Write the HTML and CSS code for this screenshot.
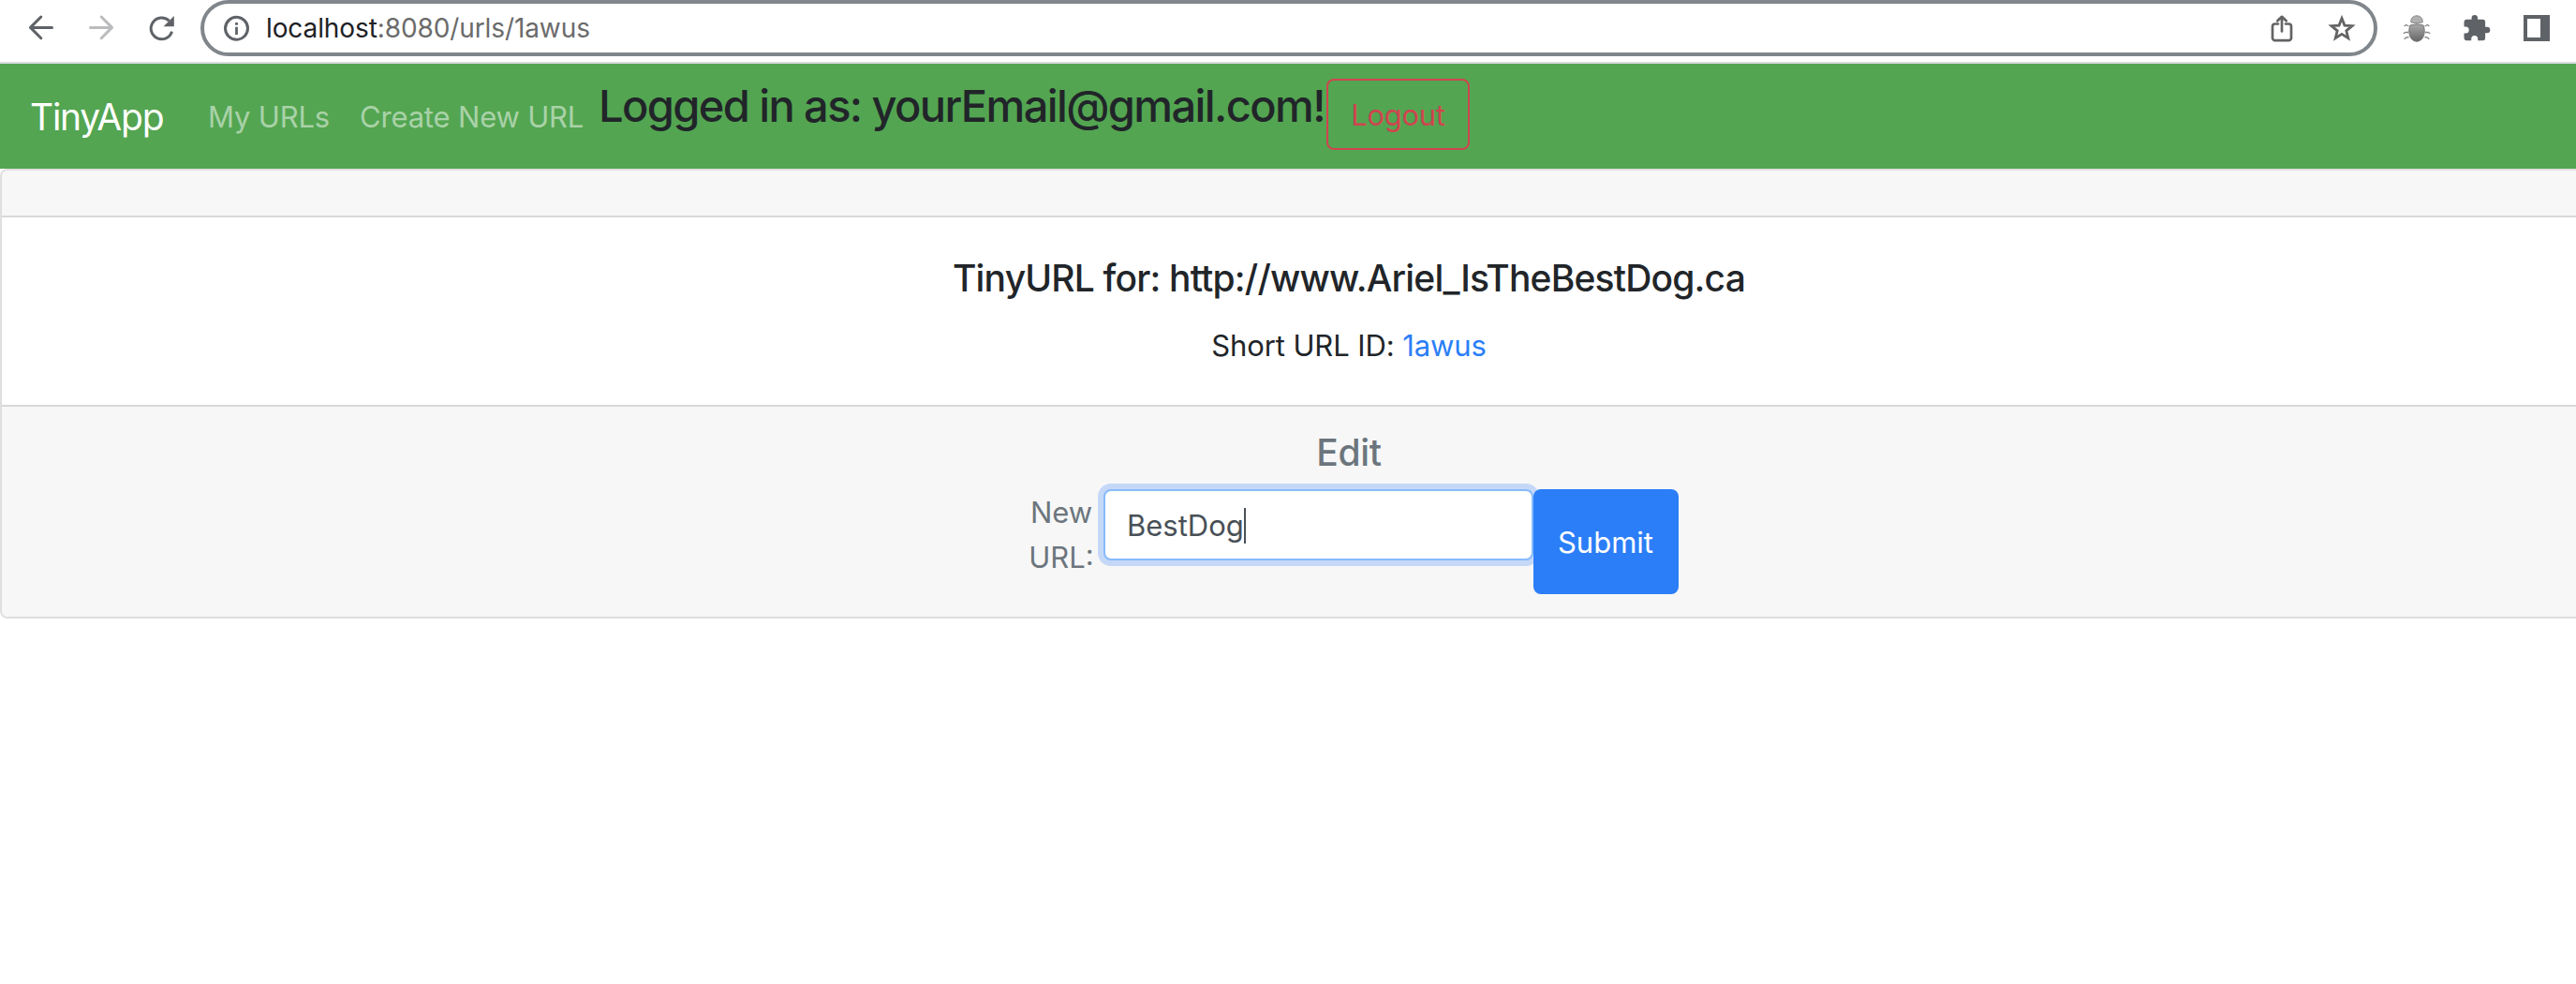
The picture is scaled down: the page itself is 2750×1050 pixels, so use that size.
FILE: index.html
```html
<!DOCTYPE html>
<html lang="en">
<head>
<meta charset="utf-8">
<title>TinyApp</title>
<link rel="stylesheet" href="styles.css">
</head>
<body>
<div class="browser-bar">
  <div class="controls">
    <svg class="icon" width="32" height="32" viewBox="0 0 32 32"><path d="M27.500 14.400H4.500M15.800 3 4.500 14.400l11.300 11.300"/></svg>
    <svg class="icon disabled" width="32" height="32" viewBox="0 0 32 32"><path d="M4.500 14.400h23M16.200 3 27.500 14.400 16.200 25.700"/></svg>
    <svg class="icon" width="32" height="32" viewBox="0 0 32 32"><path d="M24.600 7.300A11.400 11.400 0 1 0 27.500 18.600" stroke-linecap="butt"/><path class="solid" d="M29.800 2v11.200H18.600z"/></svg>
  </div>
  <div class="address">
    <svg class="icon info" width="28" height="28" viewBox="0 0 28 28"><circle cx="13.500" cy="14.300" r="12"/><path class="solid" d="M12.100 8h2.800v2.800h-2.800zM12.100 12.800h2.800V21h-2.800z"/></svg>
    <span class="url"><span class="host">localhost</span>:8080/urls/1awus</span>
    <svg class="icon share" width="24" height="30" viewBox="0 0 24 30"><path d="M8 10.500H4.700A2.700 2.700 0 0 0 2 13.200v12.300a2.700 2.700 0 0 0 2.700 2.700h14.600a2.700 2.700 0 0 0 2.700-2.700V13.200a2.700 2.700 0 0 0-2.700-2.700H16M12 18.500V3M7.300 7.300 12 2.800l4.700 4.500" stroke-width="2.700"/></svg>
    <svg class="icon star" width="30" height="30" viewBox="0 0 30 30"><path d="m15 4.500 2.950 7.550 8.100.550-6.250 5.200 2 7.900L15 21.400l-6.800 4.300 2-7.900-6.250-5.200 8.100-.550z" stroke-width="2.800" stroke-linejoin="miter" stroke-miterlimit="6"/></svg>
  </div>
  <div class="extensions">
    <svg width="30" height="30" viewBox="0 0 30 30">
      <defs><linearGradient id="shell" x2="0" y2="1"><stop stop-color="#aaa"/><stop offset="1" stop-color="#666"/></linearGradient></defs>
      <path d="M6.500 13 3.500 11.500 1.700 13M6 19.500H3l-2.300 1.300M6.500 24.500l-3 .700-1.800 1.600M23.500 13l3-1.500 1.800 1.500M24 19.500h3l2.300 1.300M23.500 24.500l3 .700 1.800 1.600" fill="none" stroke="#858585" stroke-width="1.300"/>
      <path d="M8.800 8.800C8.300 5 11 1.800 15 1.800s6.700 3.200 6.200 7C17 10 13 10 8.800 8.800z" fill="#b0b0b0" stroke="#8a8a8a"/>
      <path d="M8 12q7-2.500 14 0c2 5 1.500 10-1 14-3 4.200-9 4.200-12 0-2.500-4-3-9-1-14z" fill="url(#shell)" stroke="#777"/>
    </svg>
    <svg width="30" height="30" viewBox="0 0 30 30"><path fill="#5f6368" d="M26.100 13.800h-2V8.400a2.600 2.600 0 0 0-2.600-2.600H16V4.100a3.200 3.200 0 0 0-6.400 0v1.700H4A2.600 2.600 0 0 0 1.500 8.400v5h1.700a3.500 3.500 0 0 1 0 7H1.500v5.200A2.600 2.600 0 0 0 4 28.200h5.200v-1.700a3.500 3.500 0 0 1 7 0v1.700h5.300a2.600 2.600 0 0 0 2.600-2.600v-5.400h2a3.200 3.200 0 0 0 0-6.400z"/></svg>
    <svg class="panel" width="28" height="28" viewBox="0 0 28 28"><path fill="#5f6368" fill-rule="evenodd" d="M0 0h28v28H0zM4 4v20h14V4z"/></svg>
  </div>
</div>

<div class="page">
  <nav class="navbar">
    <a class="brand">TinyApp</a>
    <a class="nav-link">My URLs</a>
    <a class="nav-link create">Create New URL</a>
    <h3 class="login-status">Logged in as: yourEmail@gmail.com!</h3>
    <button class="logout">Logout</button>
  </nav>
  <main class="card">
    <div class="card-header"></div>
    <div class="card-body">
      <h5 class="card-title">TinyURL for: http://www.Ariel_IsTheBestDog.ca</h5>
      <p class="short-id">Short URL ID: <a class="link">1awus</a></p>
    </div>
    <div class="card-footer">
      <h5 class="edit-title">Edit</h5>
      <form class="edit-form">
        <label class="label">New<br>URL:</label>
        <div class="input" role="textbox">BestDog<span class="caret"></span></div>
        <button class="submit" type="button">Submit</button>
      </form>
    </div>
  </main>
</div>
</body>
</html>
```
FILE: styles.css
```css
* { box-sizing: border-box; }
body {
  margin: 0;
  height: 1050px;
  overflow: hidden;
  background: #fff;
  color: #212529;
  font: 400 31px/48px Inter, sans-serif;
}
h3, h5, p { margin: 0; font-weight: 500; }
svg { display: block; flex: none; }
button { font: inherit; letter-spacing: inherit; }

.browser-bar {
  display: flex;
  align-items: flex-start;
  height: 68px;
  border-bottom: 2px solid #dadcdf;
}
.icon { fill: none; stroke: #5f6368; stroke-width: 3; stroke-linecap: round; stroke-linejoin: round; }
.icon .solid { fill: #5f6368; stroke: none; }
.icon.disabled { stroke: #babcbe; }
.controls { display: flex; gap: 32px; width: 214px; padding: 15px 0 0 28px; }
.address {
  display: flex;
  align-items: center;
  width: 2324px;
  height: 60px;
  padding: 0 19px 0 21px;
  border: 4px solid #80868b;
  border-radius: 30px;
}
.url { flex: 1; margin-left: 17px; color: #6b6b6b; font-size: 28px; letter-spacing: -0.1px; }
.host { color: #202124; }
.share { margin-right: 37px; }
.share, .star { stroke: #636363; }
.extensions { display: flex; align-items: center; gap: 34px; height: 60px; margin-left: 27px; }
.panel { margin-left: 1px; }

.page { width: 2880px; }
.navbar {
  display: flex;
  align-items: center;
  height: 112px;
  padding: 16px 32px;
  background: #53a551;
}
.brand { width: 190px; padding-top: 2px; color: #fff; font-size: 39px; letter-spacing: -1.25px; }
.nav-link { width: 162px; padding-top: 2px; color: rgba(255, 255, 255, .5); white-space: nowrap; letter-spacing: -.18px; }
.nav-link.create { width: 255px; }
.login-status {
  align-self: flex-start;
  width: 777px;
  font-size: 47px;
  line-height: 58px;
  letter-spacing: -1.6px;
  white-space: nowrap;
}
.logout {
  align-self: flex-start;
  width: 153px;
  height: 76px;
  padding: 2px 0 0;
  border: 2px solid #d0444f;
  border-radius: 8px;
  background: none;
  color: #d0444f;
  letter-spacing: -.3px;
}

.card { border: 2px solid #dfdfdf; border-radius: 8px; overflow: hidden; text-align: center; }
.card-header { height: 50px; border-bottom: 2px solid #d9d9d9; background: #f7f7f7; }
.card-body { padding: 40px 40px 39px; }
.card-title { margin-bottom: 23px; font-size: 39px; line-height: 50px; letter-spacing: -.82px; }
.short-id { font-weight: 400; letter-spacing: -.1px; }
.link { color: #2b7ef7; }
.card-footer { padding: 25px 24px 24px; border-top: 2px solid #d9d9d9; background: #f7f7f7; color: #6c757d; }
.edit-title { margin-bottom: 15px; font-size: 39px; letter-spacing: -.3px; }
.edit-form { display: flex; align-items: flex-start; justify-content: center; height: 112px; padding-left: 2px; }
.label { width: 88px; padding: 1px 2px 0 0; }
.input {
  display: flex;
  align-items: center;
  width: 459px;
  height: 76px;
  padding: 1px 23px 0;
  border: 2px solid #86bbfb;
  border-radius: 8px;
  background: #fff;
  box-shadow: 0 0 0 6px #c5d8f8;
  color: #495057;
}
.caret { width: 2px; height: 38px; background: #495057; }
.submit {
  position: relative;
  width: 155px;
  height: 112px;
  padding: 2px 1px 0 0;
  border: 0;
  border-radius: 8px;
  background: #2b7ef7;
  color: #fff;
}
```
